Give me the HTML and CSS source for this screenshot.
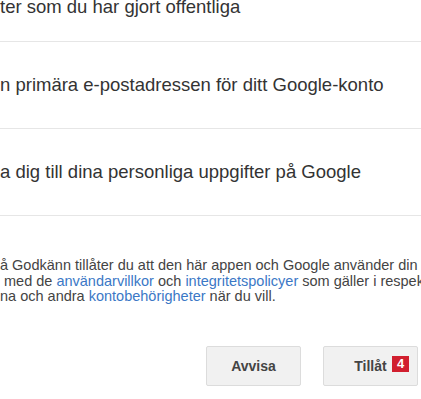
FILE: index.html
```html
<!DOCTYPE html>
<html lang="sv">

<head>
    <meta charset="UTF-8">
    <meta name="viewport" content="width=device-width, initial-scale=1.0">
    <title>Tillåt åtkomst</title>
    <link rel="stylesheet" href="styles.css">
</head>

<body>
    <div class="consent">
        <ul class="scopes">
            <li class="scope scope-first">ter som du har gjort offentliga</li>
            <li class="scope">n primära e-postadressen för ditt Google-konto</li>
            <li class="scope">a dig till dina personliga uppgifter på Google</li>
        </ul>

        <p class="terms">
            å Godkänn tillåter du att den här appen och Google använder din information<br>
            &nbsp;med de <a href="#">användarvillkor</a> och <a href="#">integritetspolicyer</a> som gäller i respektive fall.<br>
            na och andra <a href="#">kontobehörigheter</a> när du vill.
        </p>

        <div class="actions">
            <button type="button" class="btn">Avvisa</button>
            <button type="button" class="btn btn-allow">Tillåt <span class="badge">4</span></button>
        </div>
    </div>
</body>

</html>
```

FILE: styles.css
```css
html,
body {
    margin: 0;
    width: 421px;
    height: 399px;
    overflow: hidden;
    background-color: #fff;
}

body {
    font-family: "Liberation Sans", Arial, sans-serif;
    color: #333;
}

.consent {
    margin-top: -3px;
}

.scopes {
    list-style: none;
    margin: 0;
    padding: 0;
}

.scope {
    font-size: 18.5px;
    line-height: 20px;
    white-space: nowrap;
    padding: 33px 0 33px;
    border-bottom: 1px solid #e6e6e6;
}

.scope-first {
    padding: 0 0 24px;
}

.terms {
    margin: 42px 0 0;
    font-size: 14.5px;
    line-height: 15.5px;
    color: #444;
    white-space: nowrap;
}

.terms a {
    color: #3b78c6;
    text-decoration: none;
}

.actions {
    display: flex;
    justify-content: flex-end;
    gap: 22px;
    margin-top: 41px;
    padding-right: 3px;
}

.btn {
    position: relative;
    width: 95px;
    height: 40px;
    padding: 0;
    background-color: #f1f1f1;
    border: 1px solid #dcdcdc;
    border-radius: 2px;
    font-family: inherit;
    font-size: 14px;
    font-weight: bold;
    color: #444;
    cursor: pointer;
}

.badge {
    position: absolute;
    left: 68px;
    top: 9px;
    width: 17px;
    height: 16px;
    background-color: #d11f2f;
    color: #fff;
    font-size: 13px;
    line-height: 16px;
    text-align: center;
}
```
